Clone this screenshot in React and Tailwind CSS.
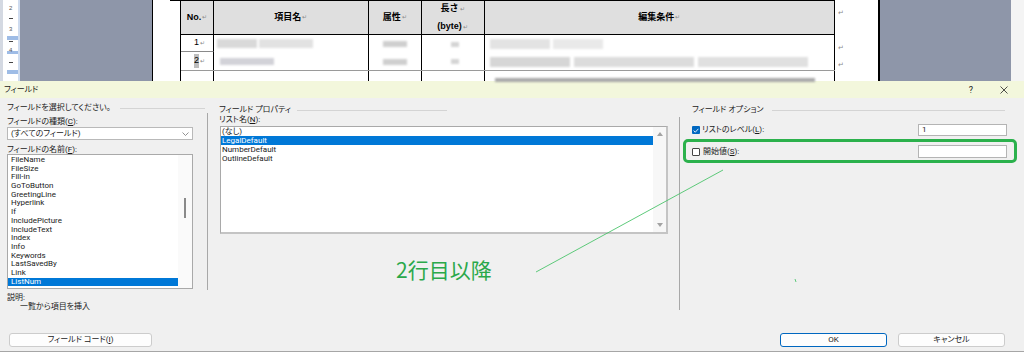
import React from "react";

const fieldNames = [
  "FileName",
  "FileSize",
  "Fill-in",
  "GoToButton",
  "GreetingLine",
  "Hyperlink",
  "If",
  "IncludePicture",
  "IncludeText",
  "Index",
  "Info",
  "Keywords",
  "LastSavedBy",
  "Link",
  "ListNum",
];

const listNames = ["(なし)", "LegalDefault", "NumberDefault", "OutlineDefault"];

const Ret = () => <span className="text-[6px] font-normal text-[#8a8a8a] ml-[1px]">↵</span>;

const Ruler = () => (
  <svg width="17" height="81" className="block">
    <rect x="0" y="0" width="17" height="81" fill="#ffffff" />
    <rect x="15" y="0" width="2" height="81" fill="#cfdcef" />
    <text x="6" y="10" fontSize="6" fill="#555">2</text>
    <rect x="6" y="18" width="4" height="1" fill="#444" />
    <text x="6" y="31" fontSize="6" fill="#555">3</text>
    <rect x="4" y="36" width="11" height="4" fill="#9ebce6" />
    <rect x="6" y="41" width="4" height="1" fill="#444" />
    <rect x="4" y="51" width="11" height="3" fill="#9ebce6" />
    <text x="6" y="52" fontSize="6" fill="#555">4</text>
    <rect x="6" y="62" width="4" height="1" fill="#444" />
    <rect x="4" y="70" width="11" height="4" fill="#9ebce6" />
  </svg>
);

const Blur = ({ className }) => <div className={`blur-[1px] ${className}`} />;

const DocumentArea = () => (
  <div className="flex h-[81px]">
    <div className="w-[3px] bg-[#d4d9e2]" />
    <Ruler />
    <div className="w-[132px] bg-[#8e96a9]" />
    <div className="w-[728px] bg-white border-l border-r-2 border-black">
      <div className="flex">
        <div className="ml-[17px] w-[665px] border-t border-black">
          <div className="ml-[10px] border-l border-black">
            {/* header */}
            <div className="flex h-[34px] bg-[#dfdfdf] border-b border-black text-[9px] font-bold">
              <div className="w-[33px] flex items-center justify-center border-r border-black">
                No.<Ret />
              </div>
              <div className="w-[155px] flex items-center justify-center border-r border-black">
                項目名<Ret />
              </div>
              <div className="w-[53px] flex items-center justify-center border-r border-black">
                属性<Ret />
              </div>
              <div className="w-[63px] flex flex-col items-center justify-center border-r border-black leading-[17px]">
                <span>長さ<Ret /></span>
                <span>(byte)<Ret /></span>
              </div>
              <div className="w-[351px] flex items-center justify-center border-r border-black">
                編集条件<Ret />
              </div>
            </div>
            {/* row 1 */}
            <div className="flex h-[17px] text-[9px]">
              <div className="w-[33px] flex items-center justify-end pr-[8px] border-r border-b border-r-black border-b-[#8a8a8a]">
                1<Ret />
              </div>
              <div className="w-[155px] border-r border-black pt-[4px] pl-[3px] flex gap-[2px]">
                <Blur className="w-[40px] h-[9px] bg-[#d9d9d9]" />
                <Blur className="w-[54px] h-[9px] bg-[#e2e2e2]" />
              </div>
              <div className="w-[53px] border-r border-black pt-[6px] pl-[14px]">
                <Blur className="w-[24px] h-[6px] bg-[#cfcfcf]" />
              </div>
              <div className="w-[63px] border-r border-black pt-[7px] pl-[29px]">
                <Blur className="w-[8px] h-[5px] bg-[#d4d4d4]" />
              </div>
              <div className="w-[351px] border-r border-black pt-[4px] pl-[5px] flex gap-[3px]">
                <Blur className="w-[60px] h-[10px] bg-[#e3e3e3]" />
                <Blur className="w-[50px] h-[10px] bg-[#e9e9e9]" />
              </div>
            </div>
            {/* row 2 */}
            <div className="flex h-[18px] text-[9px]">
              <div className="w-[33px] flex items-center justify-end pr-[8px] border-r border-black">
                <span className="bg-[#bdbdbd]">2</span>
                <Ret />
              </div>
              <div className="w-[155px] border-r border-black pt-[6px] pl-[6px]">
                <Blur className="w-[54px] h-[7px] bg-[#d2d2d8]" />
              </div>
              <div className="w-[53px] border-r border-black pt-[7px] pl-[14px]">
                <Blur className="w-[24px] h-[6px] bg-[#cfcfcf]" />
              </div>
              <div className="w-[63px] border-r border-black pt-[7px] pl-[29px]">
                <Blur className="w-[8px] h-[5px] bg-[#d4d4d4]" />
              </div>
              <div className="w-[351px] border-r border-black pt-[5px] pl-[5px] flex gap-[4px]">
                <Blur className="w-[80px] h-[10px] bg-[#d6d6d6]" />
                <Blur className="w-[120px] h-[10px] bg-[#dcdcdc]" />
                <Blur className="w-[110px] h-[10px] bg-[#e0e0e0]" />
              </div>
            </div>
            {/* row 3 (partial) */}
            <div className="flex h-[11px] border-t border-[#9a9a9a]">
              <div className="w-[33px] border-r border-black" />
              <div className="w-[155px] border-r border-black" />
              <div className="w-[53px] border-r border-black" />
              <div className="w-[63px] border-r border-black" />
              <div className="w-[351px] border-r border-black pt-[7px] pl-[10px]">
                <Blur className="w-[320px] h-[4px] bg-[#a8a8a8]" />
              </div>
            </div>
          </div>
        </div>
        <div className="flex flex-col pl-[3px] text-[7px] text-[#8a8a8a] leading-none">
          <span className="mt-[9px]">↵</span>
          <span className="mt-[28px]">↵</span>
          <span className="mt-[10px]">↵</span>
        </div>
      </div>
    </div>
    <div className="w-[131px] bg-[#8e96a9]" />
    <div className="w-[13px] bg-[#f4f4f4]" />
  </div>
);

const Button = ({ children, primary, className }) => (
  <div
    className={`h-[14px] flex items-center justify-center rounded-[3px] bg-[#fdfdfd] text-[8px] ${
      primary ? "border border-[#0067c0]" : "border border-[#cccccc]"
    } ${className}`}
  >
    {children}
  </div>
);

const FieldDialog = () => (
  <div className="h-[271px] flex flex-col text-[8px] leading-[10px] text-[#1a1a1a] [font-family:Roboto,Noto_Sans_CJK_JP,sans-serif] [font-feature-settings:'palt']">
    {/* title bar */}
    <div className="h-[17px] bg-[#f3f7dc] flex items-center pl-[4px] pr-[14px]">
      <span>フィールド</span>
      <span className="ml-auto w-[10px] text-center text-[9px]">?</span>
      <span className="ml-[22px] w-[12px] flex justify-center">
        <svg width="8" height="8" viewBox="0 0 8 8">
          <path d="M0.5 0.5 L7.5 7.5 M7.5 0.5 L0.5 7.5" stroke="#222" strokeWidth="0.8" />
        </svg>
      </span>
    </div>

    {/* body */}
    <div className="h-[254px] flex bg-[#f0f0f0] border-b border-[#a6a6a6]">
      {/* left column */}
      <div className="w-[207px] shrink-0 flex flex-col pl-[7px] pr-[2px] pb-[4px]">
        <div className="mt-[5px] h-[10px] flex items-center">
          <span>フィールドを選択してください。</span>
          <div className="flex-1 ml-[9px] h-px bg-[#d4d4d4]" />
        </div>
        <div className="mt-[4px] h-[10px]">
          フィールドの種類(<span className="underline">C</span>):
        </div>
        <div className="w-[186px] h-[13px] bg-white border border-[#b9b9b9] flex items-center">
          <span className="pl-[3px]">(すべてのフィールド)</span>
          <span className="ml-auto w-[13px] h-full flex items-center justify-center">
            <svg width="7" height="4" viewBox="0 0 7 4">
              <path d="M0.5 0.5 L3.5 3.5 L6.5 0.5" fill="none" stroke="#777" strokeWidth="0.8" />
            </svg>
          </span>
        </div>
        <div className="mt-[5px] h-[9px] leading-[9px]">
          フィールドの名前(<span className="underline">F</span>):
        </div>
        <div className="w-[186px] h-[135px] bg-white border border-[#a9a9a9] flex">
          <div className="w-[170px] pt-[1px] flex flex-col">
            {fieldNames.map((n) => (
              <div
                key={n}
                className={`h-[8.7px] leading-[8.7px] pl-[3px] ${
                  n === "ListNum" ? "bg-[#0078d7] text-white" : ""
                }`}
              >
                {n}
              </div>
            ))}
          </div>
          <div className="flex-1 bg-[#fafafa] flex flex-col items-center">
            <div className="mt-[43px] w-[2px] h-[20px] bg-[#8a8a8a]" />
          </div>
        </div>
        <div className="mt-[4px] h-[9px] leading-[9px]">説明:</div>
        <div className="h-[10px] pl-[13px]">一覧から項目を挿入</div>
        <Button className="mt-auto ml-[2px] w-[143px]">
          フィールド コード(<span className="underline">I</span>)
        </Button>
      </div>

      <div className="w-px shrink-0 self-start mt-[15px] h-[177px] bg-[#a8a8a8]" />

      {/* middle column */}
      <div className="w-[471px] shrink-0 flex flex-col pl-[11px]">
        <div className="mt-[7px] h-[10px] flex items-center">
          <span>フィールド プロパティ</span>
          <div className="ml-[6px] w-[150px] h-px bg-[#d4d4d4]" />
        </div>
        <div className="h-[10px]">
          リスト名(<span className="underline">N</span>):
        </div>
        <div className="mt-[1px] ml-[1px] w-[448px] h-[108px] bg-white border border-[#a9a9a9] border-r-2 border-b-2 border-r-[#c4c4c4] border-b-[#c4c4c4] flex">
          <div className="flex-1 flex flex-col">
            {listNames.map((n) => (
              <div
                key={n}
                className={`h-[9px] leading-[9px] pl-[1px] ${
                  n === "LegalDefault" ? "bg-[#0078d7] text-white" : ""
                }`}
              >
                {n}
              </div>
            ))}
          </div>
          <div className="w-[13px] bg-[#f7f7f7] flex flex-col items-center justify-between py-[5px]">
            <svg width="6" height="4" viewBox="0 0 6 4">
              <path d="M0 4 L3 0 L6 4 Z" fill="#a3a3a3" />
            </svg>
            <svg width="6" height="4" viewBox="0 0 6 4">
              <path d="M0 0 L3 4 L6 0 Z" fill="#a3a3a3" />
            </svg>
          </div>
        </div>
      </div>

      <div className="w-px shrink-0 self-start mt-[19px] h-[193px] bg-[#a8a8a8]" />

      {/* right column */}
      <div className="flex-1 flex flex-col pl-[12px] pr-[17px] pb-[4px]">
        <div className="mt-[7px] h-[10px] flex items-center">
          <span>フィールド オプション</span>
          <div className="flex-1 ml-[8px] mr-[2px] h-px bg-[#d4d4d4]" />
        </div>
        <div className="mt-[9px] h-[12px] flex items-center">
          <div className="w-[8px] h-[8px] rounded-[1px] bg-[#0067c0] flex items-center justify-center">
            <svg width="6" height="5" viewBox="0 0 6 5">
              <path d="M0.6 2.6 L2.3 4.2 L5.4 0.8" fill="none" stroke="#fff" strokeWidth="0.9" />
            </svg>
          </div>
          <span className="ml-[2px]">
            リストのレベル(<span className="underline">L</span>):
          </span>
          <div className="ml-auto w-[89px] h-[12px] bg-white border border-[#b4b4b4] pl-[3px] leading-[10px]">
            1
          </div>
        </div>
        <div className="mt-[9px] h-[13px] flex items-center">
          <div className="w-[8px] h-[8px] rounded-[1px] border border-[#444] bg-white" />
          <span className="ml-[3px]">
            開始値(<span className="underline">S</span>):
          </span>
          <div className="ml-auto w-[89px] h-[13px] bg-white border border-[#b4b4b4]" />
        </div>
        <div className="mt-auto mr-[2px] flex justify-end gap-[11px]">
          <Button primary className="w-[107px]">OK</Button>
          <Button className="w-[107px]">キャンセル</Button>
        </div>
      </div>
    </div>
  </div>
);

const Annotation = () => (
  <>
    <svg className="absolute left-0 top-0 pointer-events-none" width="1024" height="353">
      <line x1="723" y1="170" x2="536" y2="272" stroke="#4cc46c" strokeWidth="0.9" />
      <line x1="795" y1="279" x2="796" y2="282" stroke="#4cc46c" strokeWidth="0.9" />
    </svg>
    <div className="absolute left-[683px] top-[139px] w-[334px] h-[24px] border-[3px] border-[#2bb14c] rounded-[5px]" />
    <div className="absolute left-[396px] top-[256px] text-[21px] leading-[26px] text-[#2aa84a] [font-family:Noto_Sans_CJK_JP,sans-serif]">
      2行目以降
    </div>
  </>
);

export default function App() {
  return (
    <div className="relative w-[1024px] h-[353px] overflow-hidden bg-white text-black [font-family:Liberation_Sans,Noto_Sans_CJK_JP,sans-serif]">
      <DocumentArea />
      <FieldDialog />
      <Annotation />
    </div>
  );
}
